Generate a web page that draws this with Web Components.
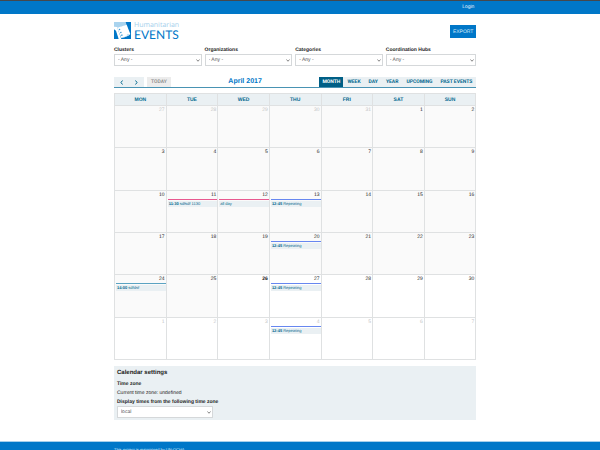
<!DOCTYPE html>
<html lang="en">
<head>
<meta charset="utf-8">
<meta name="viewport" content="width=device-width, initial-scale=1">
<title>Humanitarian Events</title>
<style>
html { --blue: #0077c8; --teal: #02688f; --deep: #005f86; --pale: #eaf0f3; --line: #dfe1e2; }
body { margin: 0; background: #fff; color: #222; font: 5px/8px "Liberation Sans", Arial, sans-serif; text-rendering: geometricPrecision; scrollbar-width: none; }
</style>
</head>
<body>
<events-page></events-page>
<script>
const define = (name, html, setup) => {
  const template = document.createElement('template');
  template.innerHTML = '<style>*{box-sizing:border-box}button,select{font:inherit;margin:0;border:0;border-radius:0;text-rendering:inherit}</style>' + html;
  customElements.define(name, class extends HTMLElement {
    constructor() {
      super();
      this.attachShadow({ mode: 'open' }).append(template.content.cloneNode(true));
    }
    connectedCallback() { if (setup) setup(this, this.shadowRoot); }
  });
};

define('top-bar', `
<style>
:host { display: block; background: var(--blue); border-top: 1px solid #45484c; }
nav { width: 60.4%; margin-left: 19%; padding: 2px 2px 3px; text-align: right; }
a { color: #e6f2fb; text-decoration: none; }
</style>
<nav><a href="#login">Login</a></nav>`);

define('site-logo', `
<style>
:host { display: block; }
a { display: flex; gap: 3px; text-decoration: none; color: var(--blue); }
svg { width: 17px; height: 17px; display: block; }
span { display: block; }
.name { font: 7px/7px "Open Sans", sans-serif; color: #a5d0ec; }
.title { font: 12px/11px Lato, sans-serif; }
</style>
<a href="#home" aria-label="Humanitarian Events">
<svg viewBox="0 0 51 51" aria-hidden="true">
<path d="M0 0H51V51H0Z" fill="#0077c8"/>
<path d="M0 0H35L38 10L10 18L0 18Z" fill="#a9d3ee"/>
<path d="M0 14L9 15L22 51H14L6 26L0 22Z" fill="#fff"/>
<path d="M9 17L38 8L49 36Q42 44 22 48Z" fill="#fff"/>
<path d="M49 36Q42 44 22 48L38 42L39 36Z" fill="#c5e1f4"/>
<path d="M14 21l4-1 1 4-4 1zM18 30l4-1 1 4-4 1zM21 38l4-1 1 4-4 1z" fill="#3d9ad6"/>
</svg>
<span><span class="name">Humanitarian</span><span class="title">EVENTS</span></span>
</a>`);

define('export-button', `
<style>
:host { display: block; }
button { display: block; background: var(--blue); color: #d6eafa; padding: 3px 3px 2px; }
</style>
<button type="button"><slot></slot></button>`);

define('select-field', `
<style>
:host { display: block; }
label { display: block; font-weight: bold; color: #222; }
.box { display: grid; align-items: center; }
select { grid-area: 1 / 1; width: 100%; height: 12px; padding: 0 3px; appearance: none; background: #fff; color: #555; border: 1px solid #d5d8da; }
svg { grid-area: 1 / 1; justify-self: end; width: 4px; height: 3px; margin-right: 2px; pointer-events: none; }
</style>
<label for="field"></label>
<div class="box"><select id="field"><option></option></select>
<svg viewBox="0 0 8 6" aria-hidden="true"><path d="M1 1L4 4.500L7 1" fill="none" stroke="#555" stroke-width="1.400"/></svg></div>`,
(host, root) => {
  root.querySelector('label').textContent = host.getAttribute('label');
  root.querySelector('option').textContent = host.getAttribute('value');
});

define('calendar-toolbar', `
<style>
:host { display: flex; justify-content: space-between; align-items: center; border-bottom: 1px solid #4993b3; font-family: Roboto, sans-serif; }
div { display: flex; }
h2 { margin: 0; font: bold 7px/10px "Liberation Sans", sans-serif; color: var(--blue); }
button { display: block; height: 10px; padding: 1px 4px; background: var(--pale); color: var(--teal); font-weight: bold; }
.arrow { width: 15px; padding: 0 6px; }
.arrow svg { display: block; width: 3px; height: 5px; }
.today { margin-left: 3px; background: #ececec; color: #858585; font-weight: 500; }
.views button[aria-pressed=true] { padding: 1px 3px; background: var(--deep); color: #fff; }
</style>
<div>
<button class="arrow" type="button" aria-label="Previous"><svg viewBox="0 0 6 10"><path d="M5 1L2 5L5 9" fill="none" stroke="#02688f" stroke-width="2"/></svg></button>
<button class="arrow" type="button" aria-label="Next"><svg viewBox="0 0 6 10"><path d="M1 1L4 5L1 9" fill="none" stroke="#02688f" stroke-width="2"/></svg></button>
<button class="today" type="button">TODAY</button>
</div>
<h2>April 2017</h2>
<div class="views">
<button type="button" aria-pressed="true">MONTH</button><button type="button">WEEK</button><button type="button">DAY</button><button type="button">YEAR</button><button type="button">UPCOMING</button><button type="button">PAST EVENTS</button>
</div>`);

define('calendar-event', `
<style>
:host { display: block; margin-left: 1px; border-top: 1px solid var(--event-color); }
a { display: block; margin-top: 1px; padding: 0 1px; font-size: 4px; line-height: 6px; background: var(--pale); color: var(--teal); text-decoration: none; white-space: nowrap; }
</style>
<a href="#event"><b></b> <slot></slot></a>`,
(host, root) => {
  root.querySelector('b').textContent = host.getAttribute('time') || '';
  host.style.setProperty('--event-color', host.getAttribute('color'));
});

define('month-calendar', `
<style>
:host { display: block; }
table { width: 100%; height: 267px; border-collapse: collapse; table-layout: fixed; }
th { height: 12px; padding: 0; background: var(--pale); color: var(--teal); border: 1px solid var(--line); line-height: 8px; }
td { height: 42px; padding: 0; vertical-align: top; text-align: right; border: 1px solid var(--line); }
td > span { display: block; padding: 0 1px; line-height: 8px; }
td.past { background: #fafafa; }
td.other > span { color: #c2c4c5; }
td.today > span { font-weight: bold; }
calendar-event { text-align: left; }
</style>
<table><thead><tr></tr></thead><tbody></tbody></table>`,
(host, root) => {
  const events = {
    15: ['11:30', 'sdfsdf 1130', '#e8588f'],
    16: ['', 'all day', '#e8588f'],
    17: ['12:45', 'Repeating', '#6787f0'],
    24: ['12:45', 'Repeating', '#6787f0'],
    28: ['14:00', 'sdfdsf', '#5ba3c2'],
    31: ['12:45', 'Repeating', '#6787f0'],
    38: ['12:45', 'Repeating', '#6787f0']
  };
  root.querySelector('thead tr').innerHTML = ['MON', 'TUE', 'WED', 'THU', 'FRI', 'SAT', 'SUN'].map(d => `<th scope="col">${d}</th>`).join('');
  let rows = '';
  for (let i = 0; i < 42; i++) {
    const day = i < 5 ? 27 + i : i < 35 ? i - 4 : i - 34;
    const cls = [i < 30 && 'past', (i < 5 || i > 34) && 'other', i === 30 && 'today'].filter(Boolean).join(' ');
    const e = events[i];
    if (i % 7 === 0) rows += '<tr>';
    rows += `<td class="${cls}"><span>${day}</span>${e ? `<calendar-event time="${e[0]}" color="${e[2]}">${e[1]}</calendar-event>` : ''}</td>`;
    if (i % 7 === 6) rows += '</tr>';
  }
  root.querySelector('tbody').innerHTML = rows;
});

define('calendar-settings', `
<style>
:host { display: block; background: var(--pale); padding: 2px 3px; }
h2 { margin: 0; font-size: 6px; line-height: 11px; }
h3 { margin: 1px 0 0; font-size: 5px; line-height: 8px; }
p { margin: 1px 0; line-height: 8px; }
select-field { width: 27%; white-space: nowrap; }
</style>
<h2>Calendar settings</h2>
<h3>Time zone</h3>
<p>Current time zone: undefined</p>
<select-field label="Display times from the following time zone" value="local"></select-field>`);

define('site-footer', `
<style>
:host { display: block; background: var(--blue); border-top: 1px solid #a5cfeb; color: #d6eafa; }
p { width: 60.4%; margin: 0 0 0 19%; padding: 4px 0; font-size: 4px; line-height: 8px; }
</style>
<p>This project is maintained by UN-OCHA</p>`);

define('events-page', `
<style>
:host { display: block; }
main { width: 60.4%; margin-left: 19%; }
header { display: flex; justify-content: space-between; align-items: center; padding-top: 8px; }
.filters { display: grid; grid-template-columns: repeat(4, 1fr); margin-top: 6px; }
.filters select-field:not(:last-child) { margin-right: 3px; }
calendar-toolbar { margin-top: 11px; }
month-calendar { margin-top: 5px; }
calendar-settings { margin-top: 6px; }
site-footer { margin-top: 21px; }
</style>
<top-bar></top-bar>
<main>
<header><site-logo></site-logo><export-button>EXPORT</export-button></header>
<div class="filters">
<select-field label="Clusters" value="- Any -"></select-field>
<select-field label="Organizations" value="- Any -"></select-field>
<select-field label="Categories" value="- Any -"></select-field>
<select-field label="Coordination Hubs" value="- Any -"></select-field>
</div>
<calendar-toolbar></calendar-toolbar>
<month-calendar></month-calendar>
<calendar-settings></calendar-settings>
</main>
<site-footer></site-footer>`);
</script>
</body>
</html>
